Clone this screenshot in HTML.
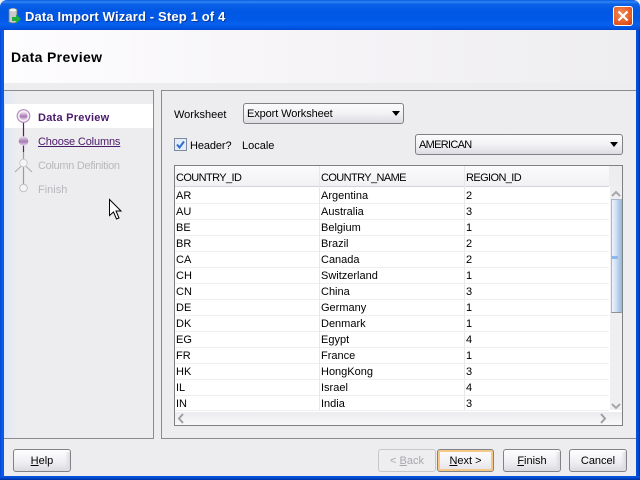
<!DOCTYPE html>
<html><head><meta charset="utf-8">
<style>
html,body{margin:0;padding:0;width:640px;height:480px;overflow:hidden;background:#edecee}
body{position:relative;font-family:"Liberation Sans",sans-serif;font-size:11px;color:#000}
div,span,svg{position:absolute;white-space:nowrap}
span.u{position:static;text-decoration:underline}
.btn{height:21px;top:449px;border:1px solid #7f8287;border-radius:3px;box-sizing:content-box;background:linear-gradient(#fdfdfe,#f0eff3 55%,#dcdce0);text-align:center;line-height:23px;font-size:11px}
.btn i{position:absolute;right:0;top:2px;width:5px;height:17px;background:linear-gradient(90deg,transparent,#dcdbdf);font-style:normal}
.combo{border:1px solid #7f8287;border-radius:3px;background:linear-gradient(#fbfbfc,#f2f1f4 50%,#dddce1);line-height:21px;height:19px;box-sizing:content-box;padding-left:3px}
.arrow{width:0;height:0;border-left:4px solid transparent;border-right:4px solid transparent;border-top:5px solid #000}
.c{font-size:11px;line-height:18px;height:16px}
.h{letter-spacing:-.6px}
.vl{width:1px;background:#e8e8ec}
.l{left:175px;width:434px;height:1px;background:#eeeef0}
</style></head><body>
<!-- title bar -->
<div style="left:0;top:0;width:640px;height:30px;background:linear-gradient(#0a5ae0 0,#2f86f5 2px,#0d62e6 4px,#0058e4 10px,#0058e6 19px,#0860ee 24px,#0054e2 28px,#0048d0 30px);border-radius:7px 7px 0 0"></div>
<div style="left:0;top:30px;width:4px;height:450px;background:linear-gradient(90deg,#0047d0,#0a5cf0 50%,#0858e8)"></div>
<div style="left:636px;top:30px;width:4px;height:450px;background:linear-gradient(90deg,#0a50d8,#0048d4 60%,#00309c)"></div>
<div style="left:0;top:476px;width:640px;height:4px;background:linear-gradient(#0a58e4,#0046c8 60%,#002f98)"></div>
<!-- app icon -->
<svg style="left:7px;top:7px" width="15" height="18" viewBox="0 0 15 18"><path d="M2 2.5Q6 0 10 2.500V15Q6 17 2 15Z" fill="#c9c9cc" stroke="#6e7a8a" stroke-width=".8"/><ellipse cx="6" cy="3" rx="3.500" ry="1.500" fill="#f2f2f2"/><path d="M5 10H9V7.500L14 12L9 16.500V14H5Z" fill="#1fae3c"/></svg>
<div style="left:25px;top:8px;font-weight:bold;font-size:13px;line-height:18px;color:#fff;letter-spacing:.15px;text-shadow:1px 1px 0 #0a3a9c">Data Import Wizard - Step 1 of 4</div>
<!-- close -->
<div style="left:613px;top:6px;width:20px;height:20px;border:1px solid #fff;box-sizing:border-box;border-radius:3px;background:radial-gradient(circle at 40% 35%,#f08a58,#e55a22 65%,#c53c10)"></div>
<svg style="left:613px;top:6px" width="20" height="20" viewBox="0 0 20 20"><path d="M5.500 5.500L14.500 14.500M14.500 5.500L5.500 14.500" stroke="#fff" stroke-width="2.200"/></svg>
<!-- header -->
<div style="left:4px;top:30px;width:632px;height:53px;background:linear-gradient(90deg,#fdfcfe,#f5f3f6 55%,#eeedef)"></div>
<div style="left:11px;top:48px;font-weight:bold;font-size:14px;line-height:18px;letter-spacing:.35px">Data Preview</div>
<!-- panels -->
<div style="left:4px;top:90px;width:150px;height:349px;box-sizing:border-box;border:1px solid #8b8b8f;border-left:0;background:#edecee"></div>
<div style="left:4px;top:91px;width:12px;height:347px;background:linear-gradient(90deg,#dfe8f6,#edecee)"></div>
<div style="left:161px;top:90px;width:475px;height:349px;box-sizing:border-box;border:1px solid #8b8b8f;border-right:0;background:#edecee"></div>
<!-- train -->
<div style="left:5px;top:104px;width:148px;height:24px;background:#fff"></div>
<svg style="left:10px;top:100px" width="40" height="100" viewBox="0 0 40 100">
<defs><linearGradient id="p" x1="0" y1="0" x2="0" y2="1"><stop offset="0" stop-color="#ece4ee"/><stop offset=".55" stop-color="#a878b4"/><stop offset="1" stop-color="#e6d8ea"/></linearGradient></defs>
<path d="M13.500 20V52" stroke="#5a1c6c" stroke-width="1.200" fill="none"/>
<path d="M13.500 52V88" stroke="#9c9ca0" stroke-width="1.200" fill="none"/>
<path d="M5 72L13.500 64L22 72" stroke="#a8a8ac" stroke-width="1" fill="none"/>
<circle cx="13.500" cy="16" r="6.300" fill="#f6f0f7" stroke="#b68cc0" stroke-width="1.200"/>
<circle cx="13.500" cy="16" r="4" fill="url(#p)"/>
<circle cx="13.500" cy="41" r="4.800" fill="url(#p)"/>
<circle cx="13.500" cy="63" r="3.800" fill="#f4f4f6" stroke="#c8c8cc" stroke-width=".8"/>
<circle cx="13.500" cy="88" r="3.800" fill="#f4f4f6" stroke="#b8b8bc" stroke-width=".8"/>
</svg>
<div style="left:38px;top:110px;font-weight:bold;font-size:11px;line-height:16px;color:#4a1a6a;letter-spacing:.25px">Data Preview</div>
<div style="left:38px;top:134px;font-size:11px;line-height:16px;color:#4a1a6a;text-decoration:underline;letter-spacing:-.15px">Choose Columns</div>
<div style="left:38px;top:158px;font-size:11px;line-height:16px;color:#b8b8bc;letter-spacing:-.3px">Column Definition</div>
<div style="left:38px;top:182px;font-size:11px;line-height:16px;color:#b8b8bc">Finish</div>
<!-- cursor -->
<svg style="left:108px;top:198px" width="16" height="24" viewBox="0 0 16 24"><path d="M1.500 1.500V17.500L5.500 14L8.500 21L11 20L8 13H13Z" fill="#fff" stroke="#000" stroke-width="1"/></svg>
<!-- form -->
<div style="left:174px;top:107px;line-height:16px">Worksheet</div>
<div class="combo" style="left:243px;top:103px;width:156px;letter-spacing:-.1px">Export Worksheet</div>
<div class="arrow" style="left:392px;top:111px"></div>
<div style="left:174px;top:138px;width:13px;height:13px;box-sizing:border-box;border:1px solid #7d8ba0;background:#e4ecf8"></div>
<svg style="left:174px;top:138px" width="13" height="13" viewBox="0 0 13 13"><path d="M3 6.500L5.500 9.500L10 3.500" stroke="#2f6fd0" stroke-width="2" fill="none"/></svg>
<div style="left:190px;top:138px;line-height:16px;letter-spacing:-.1px">Header?</div>
<div style="left:242px;top:138px;line-height:16px">Locale</div>
<div class="combo" style="left:415px;top:134px;width:203px"><span style="position:static;letter-spacing:-.7px">AMERICAN</span></div>
<div class="arrow" style="left:610px;top:142px"></div>
<!-- table -->
<div style="left:174px;top:165px;width:449px;height:261px;box-sizing:border-box;border:1px solid #7f8084;background:#fff"></div>
<div style="left:175px;top:166px;width:434px;height:20px;background:linear-gradient(#fbfbfd,#f1f1f4);border-bottom:1px solid #d4d4d8"></div>
<div style="left:609px;top:166px;width:13px;height:20px;background:#edecee"></div>
<div class="vl" style="left:319px;top:166px;height:245px"></div>
<div class="vl" style="left:464px;top:166px;height:245px"></div>
<div class="c h" style="left:176px;top:169px">COUNTRY_ID</div>
<div class="c h" style="left:321px;top:169px">COUNTRY_NAME</div>
<div class="c h" style="left:466px;top:169px">REGION_ID</div>
<!-- row lines -->
<div class="l" style="top:203px"></div>
<div class="l" style="top:219px"></div>
<div class="l" style="top:235px"></div>
<div class="l" style="top:251px"></div>
<div class="l" style="top:267px"></div>
<div class="l" style="top:283px"></div>
<div class="l" style="top:299px"></div>
<div class="l" style="top:315px"></div>
<div class="l" style="top:331px"></div>
<div class="l" style="top:347px"></div>
<div class="l" style="top:363px"></div>
<div class="l" style="top:379px"></div>
<div class="l" style="top:395px"></div>
<div class="l" style="top:410px"></div>
<div class="c" style="left:176px;top:187px">AR</div><div class="c" style="left:321px;top:187px">Argentina</div><div class="c" style="left:466px;top:187px">2</div>
<div class="c" style="left:176px;top:203px">AU</div><div class="c" style="left:321px;top:203px">Australia</div><div class="c" style="left:466px;top:203px">3</div>
<div class="c" style="left:176px;top:219px">BE</div><div class="c" style="left:321px;top:219px">Belgium</div><div class="c" style="left:466px;top:219px">1</div>
<div class="c" style="left:176px;top:235px">BR</div><div class="c" style="left:321px;top:235px">Brazil</div><div class="c" style="left:466px;top:235px">2</div>
<div class="c" style="left:176px;top:251px">CA</div><div class="c" style="left:321px;top:251px">Canada</div><div class="c" style="left:466px;top:251px">2</div>
<div class="c" style="left:176px;top:267px">CH</div><div class="c" style="left:321px;top:267px">Switzerland</div><div class="c" style="left:466px;top:267px">1</div>
<div class="c" style="left:176px;top:283px">CN</div><div class="c" style="left:321px;top:283px">China</div><div class="c" style="left:466px;top:283px">3</div>
<div class="c" style="left:176px;top:299px">DE</div><div class="c" style="left:321px;top:299px">Germany</div><div class="c" style="left:466px;top:299px">1</div>
<div class="c" style="left:176px;top:315px">DK</div><div class="c" style="left:321px;top:315px">Denmark</div><div class="c" style="left:466px;top:315px">1</div>
<div class="c" style="left:176px;top:331px">EG</div><div class="c" style="left:321px;top:331px">Egypt</div><div class="c" style="left:466px;top:331px">4</div>
<div class="c" style="left:176px;top:347px">FR</div><div class="c" style="left:321px;top:347px">France</div><div class="c" style="left:466px;top:347px">1</div>
<div class="c" style="left:176px;top:363px">HK</div><div class="c" style="left:321px;top:363px">HongKong</div><div class="c" style="left:466px;top:363px">3</div>
<div class="c" style="left:176px;top:379px">IL</div><div class="c" style="left:321px;top:379px">Israel</div><div class="c" style="left:466px;top:379px">4</div>
<div class="c" style="left:176px;top:395px">IN</div><div class="c" style="left:321px;top:395px">India</div><div class="c" style="left:466px;top:395px">3</div>
<!-- scrollbars -->
<div style="left:610px;top:186px;width:12px;height:224px;background:#efeef1"></div>
<svg style="left:610px;top:186px" width="12" height="14" viewBox="0 0 12 14"><path d="M2 10L6 6L10 10" stroke="#a8a8ac" stroke-width="2" fill="none"/></svg>
<div style="left:611px;top:199px;width:11px;height:114px;box-sizing:border-box;border:1px solid #a9b6cc;border-bottom-color:#8e8e94;background:linear-gradient(90deg,#f0f3fb,#d4e2f4 40%,#9cbce0)"></div>
<div style="left:612px;top:256px;width:6px;height:3px;background:#8cb8ee"></div>
<svg style="left:610px;top:399px" width="12" height="14" viewBox="0 0 12 14"><path d="M2 5L6 9L10 5" stroke="#a8a8ac" stroke-width="2" fill="none"/></svg>
<div style="left:175px;top:412px;width:447px;height:13px;background:linear-gradient(#eceaee,#f8f8fa)"></div>
<svg style="left:175px;top:412px" width="14" height="13" viewBox="0 0 14 13"><path d="M8 2L4 6.500L8 11" stroke="#a0a0a4" stroke-width="2" fill="none"/></svg>
<svg style="left:596px;top:412px" width="14" height="13" viewBox="0 0 14 13"><path d="M5 2L9 6.500L5 11" stroke="#a0a0a4" stroke-width="2" fill="none"/></svg>
<!-- bottom buttons -->
<div class="btn" style="left:13px;width:56px"><span class="u">H</span>elp<i></i></div>
<div class="btn" style="left:378px;width:56px;border-color:#c8c8cc;background:#eeedf0;color:#a8a8ac">&lt; <span class="u">B</span>ack</div>
<div class="btn" style="left:437px;width:55px;box-shadow:inset 0 0 0 2px #f6c888;background:linear-gradient(#fdfdfe,#f2f1f4 55%,#e4e2e6)"><span class="u">N</span>ext &gt;</div>
<div class="btn" style="left:503px;width:56px"><span class="u">F</span>inish<i></i></div>
<div class="btn" style="left:569px;width:56px">Cancel<i></i></div>
</body></html>
